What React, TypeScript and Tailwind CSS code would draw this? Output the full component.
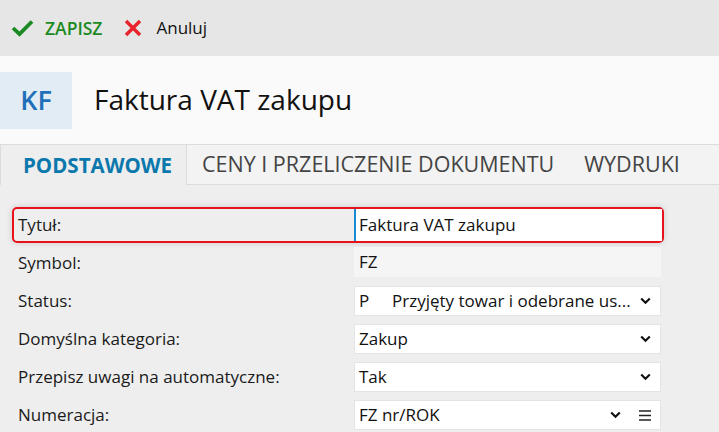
import React from "react";

const Chevron = () => (
  <svg width="11" height="8" viewBox="0 0 11 8" className="shrink-0">
    <path d="M1.2 1.5 L5.5 5.8 L9.8 1.5" fill="none" stroke="#111" strokeWidth="2.1" />
  </svg>
);

const Hamburger = () => (
  <svg width="12" height="11" viewBox="0 0 12 11" className="shrink-0">
    <path d="M0 1h12M0 5.5h12M0 10h12" stroke="#222" strokeWidth="1.4" />
  </svg>
);

function Row({
  label,
  children,
  highlight,
}: {
  label: string;
  children: React.ReactNode;
  highlight?: boolean;
}) {
  return (
    <div
      className={
        "flex h-[36px] mb-[2px] rounded-[5px] border-2 " +
        (highlight ? "border-[#e8121c] shadow-[0_0_6px_rgba(0,0,0,0.15)]" : "border-transparent")
      }
    >
      <div className="w-[340px] shrink-0 flex items-center pl-[4px] text-[17px] text-[#1a1a1a]">
        {label}
      </div>
      {children}
    </div>
  );
}

export default function App() {
  return (
    <div
      className="w-[719px] h-[432px] overflow-hidden bg-[#eeeeee] flex flex-col"
      style={{ fontFamily: '"Open Sans", "Noto Sans", sans-serif' }}
    >
      {/* toolbar */}
      <div className="h-[56px] shrink-0 bg-[#e6e6e6] flex items-center pl-[11px]">
        <svg width="23" height="18" viewBox="0 0 23 18" className="mr-[11px]">
          <path d="M2 9 L8.5 15.2 L21 2.5" fill="none" stroke="#1c8a23" strokeWidth="3.8" />
        </svg>
        <span className="text-[17.5px] font-semibold text-[#1c8a23]">ZAPISZ</span>
        <svg width="18" height="18" viewBox="0 0 18 18" className="ml-[22px] mr-[14px]">
          <path d="M2 2 L16 16 M16 2 L2 16" stroke="#e8252c" strokeWidth="3.4" />
        </svg>
        <span className="text-[17px] text-[#111]">Anuluj</span>
      </div>

      {/* header */}
      <div className="h-[88px] shrink-0 bg-[#fafafa] flex items-center">
        <div className="w-[72px] h-[57px] bg-[#e1ecf4] flex items-center justify-center text-[27px] text-[#1f70b8] font-semibold">
          KF
        </div>
        <div className="ml-[22px] text-[28px] text-[#111] leading-none pb-[2px]">Faktura VAT zakupu</div>
      </div>

      {/* tabs */}
      <div className="h-[41px] shrink-0 bg-[#f3f3f3] border-t border-b border-[#dcdcdc] flex items-end">
        <div className="h-[41px] w-[187px] -mb-px mt-[-1px] bg-[#eeeeee] border border-b-0 border-[#dcdcdc] flex items-center pl-[22px] text-[20.5px] font-bold text-[#0b78ad] whitespace-nowrap">
          PODSTAWOWE
        </div>
        <div className="h-full flex items-center ml-[15px] text-[21.5px] text-[#444] whitespace-nowrap">CENY I PRZELICZENIE DOKUMENTU</div>
        <div className="h-full flex items-center ml-[30px] text-[21.5px] text-[#444] whitespace-nowrap">WYDRUKI</div>
      </div>

      {/* form */}
      <div className="pt-[22px] pl-[12px] w-[664px]">
        <Row label="Tytuł:" highlight>
          <div className="flex-1 flex items-center bg-white border-l-2 border-[#1a8ad4] pl-[3px] text-[17px] text-[#111]">
            Faktura VAT zakupu
          </div>
        </Row>
        <Row label="Symbol:">
          <div className="flex-1 flex items-center bg-[#f5f5f5] pl-[5px] text-[17px] text-[#111] mr-[1px] mb-[2px]">FZ</div>
        </Row>
        <Row label="Status:">
          <div className="flex-1 flex items-center bg-white pl-[4px] pr-[9px] text-[17px] text-[#111] mr-[1px] my-[1px] border border-[#e4e4e4]">
            <span className="w-[33px]">P</span>
            <span className="flex-1 whitespace-nowrap overflow-hidden">Przyjęty towar i odebrane us...</span>
            <Chevron />
          </div>
        </Row>
        <Row label="Domyślna kategoria:">
          <div className="flex-1 flex items-center bg-white pl-[4px] pr-[9px] text-[17px] text-[#111] mr-[1px] my-[1px] border border-[#e4e4e4]">
            <span className="flex-1">Zakup</span>
            <Chevron />
          </div>
        </Row>
        <Row label="Przepisz uwagi na automatyczne:">
          <div className="flex-1 flex items-center bg-white pl-[4px] pr-[9px] text-[17px] text-[#111] mr-[1px] my-[1px] border border-[#e4e4e4]">
            <span className="flex-1">Tak</span>
            <Chevron />
          </div>
        </Row>
        <Row label="Numeracja:">
          <div className="flex-1 flex items-center bg-white pl-[4px] pr-[9px] text-[17px] text-[#111] mr-[1px] my-[1px] border border-[#e4e4e4]">
            <span className="flex-1">FZ nr/ROK</span>
            <Chevron />
            <span className="ml-[18px] flex"><Hamburger /></span>
          </div>
        </Row>
      </div>
    </div>
  );
}
